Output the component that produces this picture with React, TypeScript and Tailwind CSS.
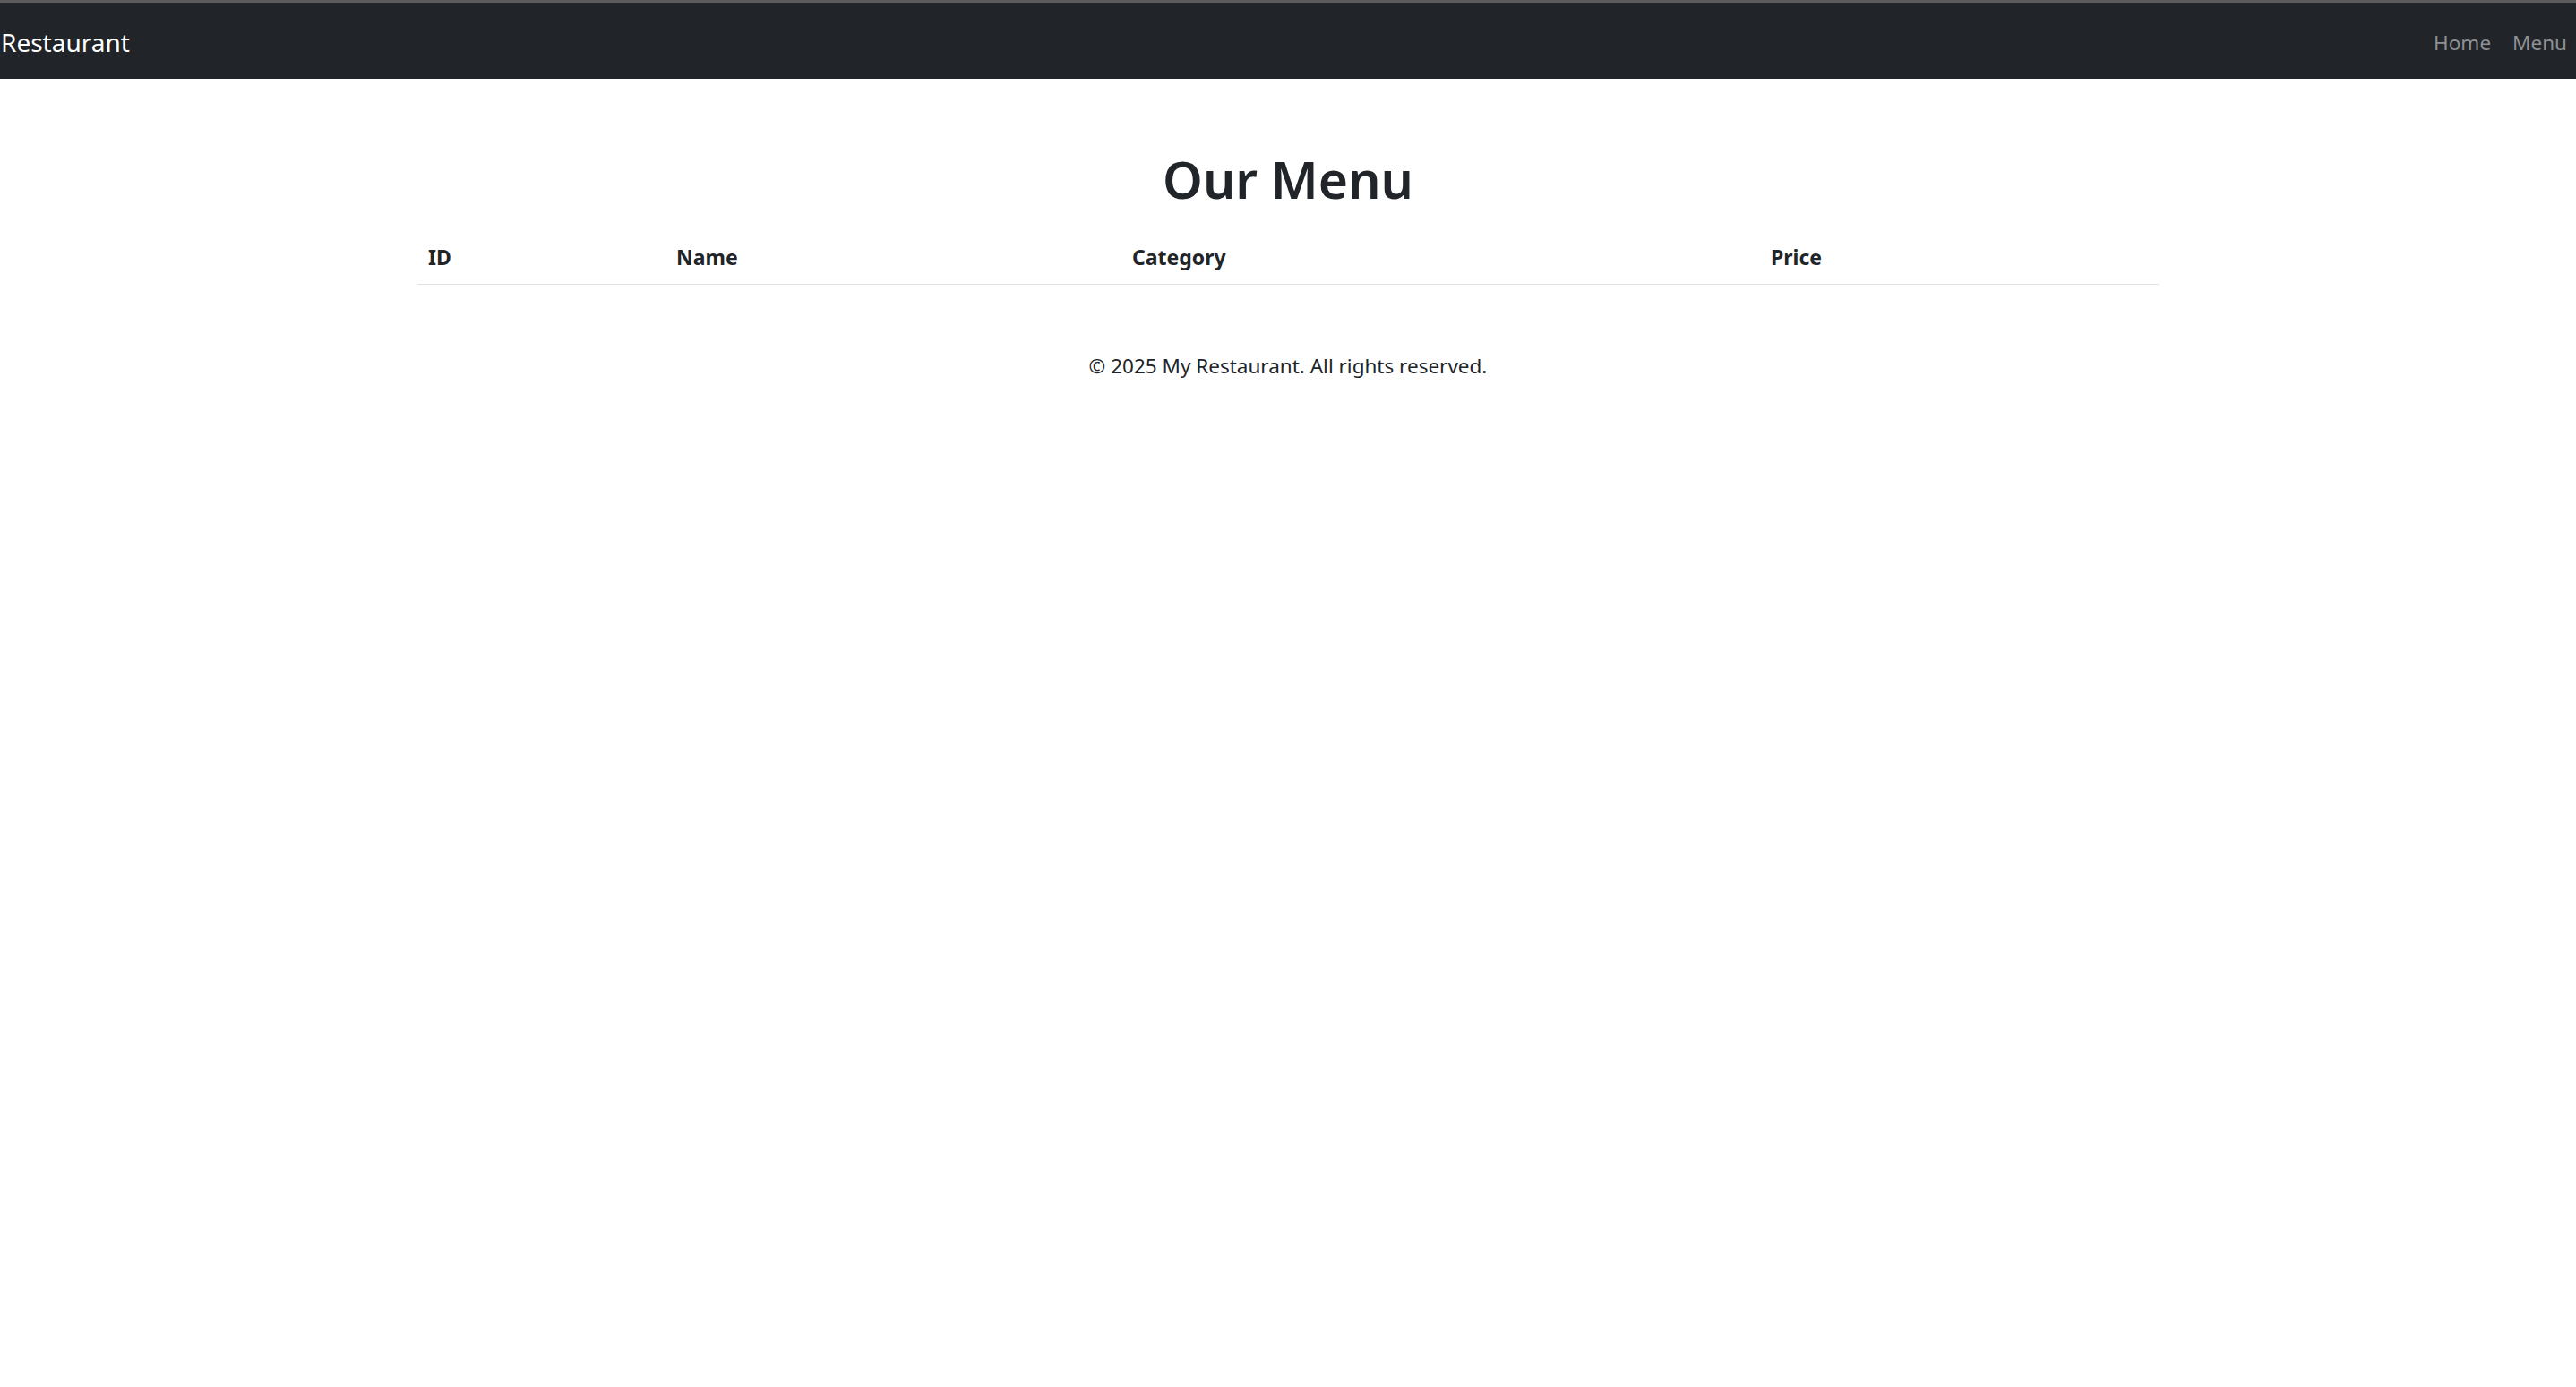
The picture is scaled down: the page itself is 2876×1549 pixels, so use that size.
import { FC } from "react";

const columns = [
    { label: "ID", width: "w-[277px]" },
    { label: "Name", width: "w-[509px]" },
    { label: "Category", width: "w-[713px]" },
    { label: "Price", width: "w-[445px]" },
];

const App: FC = () => {
    return (
        <div className="min-h-screen bg-white text-[#212529] font-['Noto_Sans',sans-serif]">
            {/* navbar */}
            <div className="h-[3px] bg-[#5b5b5b]" />
            <nav className="h-[85px] pt-[4px] bg-[#212529] flex items-center justify-between">
                <a className="text-[28px] leading-[45px] text-white pl-[1px]">Restaurant</a>
                <div className="flex">
                    <a className="px-[12px] text-[22.5px] leading-[36px] text-[#8e9093]">Home</a>
                    <a className="px-[12px] pr-[10px] text-[22.5px] leading-[36px] text-[#8e9093]">Menu</a>
                </div>
            </nav>

            <main className="w-[1944px] mx-auto">
                <h1 className="mt-[76px] text-center text-[57px] leading-[72px] font-semibold">Our Menu</h1>
                <table className="mt-[21px] w-full border-collapse">
                    <thead>
                        <tr className="border-b border-[#dee2e6]">
                            {columns.map((c) => (
                                <th key={c.label} className={`${c.width} p-[12px] text-left text-[23px] leading-[36px] font-bold`}>
                                    {c.label}
                                </th>
                            ))}
                        </tr>
                    </thead>
                    <tbody />
                </table>
            </main>

            <footer className="mt-[73px] text-center text-[22.5px] leading-[36px]">
                © 2025 My Restaurant. All rights reserved.
            </footer>
        </div>
    );
};

export default App;
